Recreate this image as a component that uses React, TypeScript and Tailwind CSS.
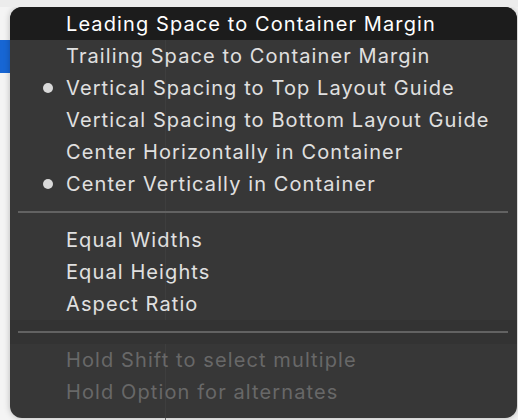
import React from 'react';

type Item = { label: string; bullet?: boolean; highlighted?: boolean; disabled?: boolean };

const groupA: Item[] = [
  { label: 'Leading Space to Container Margin', highlighted: true },
  { label: 'Trailing Space to Container Margin' },
  { label: 'Vertical Spacing to Top Layout Guide', bullet: true },
  { label: 'Vertical Spacing to Bottom Layout Guide' },
  { label: 'Center Horizontally in Container' },
  { label: 'Center Vertically in Container', bullet: true },
];

const groupB: Item[] = [{ label: 'Equal Widths' }, { label: 'Equal Heights' }, { label: 'Aspect Ratio' }];

const hints: Item[] = [
  { label: 'Hold Shift to select multiple', disabled: true },
  { label: 'Hold Option for alternates', disabled: true },
];

function Row({ item, first }: { item: Item; first?: boolean }) {
  const color = item.highlighted ? 'text-white bg-[#1c1c1c]' : item.disabled ? 'text-[#686868]' : 'text-[#e0e0e0]';
  return (
    <div className={`flex items-center ${first ? 'h-[33px]' : 'h-[32px]'} ${color}`}>
      <div className="w-[56px] flex justify-end pr-[13px]">
        {item.bullet && <span className="block w-[10px] h-[10px] rounded-full bg-[#d9d9d9]" />}
      </div>
      <span className="text-[20px] leading-none tracking-[0.055em] whitespace-nowrap">{item.label}</span>
    </div>
  );
}

function Separator() {
  return (
    <div className="h-[24px] flex items-center pl-[8px] pr-[9px]">
      <div className="h-[2px] w-full bg-[#626262]" />
    </div>
  );
}

export default function App() {
  return (
    <div
      className="relative w-[518px] h-[420px] overflow-hidden bg-[#f4f4f4] border-t-[7px] border-[#ececec]"
      style={{ fontFamily: 'Inter, "Helvetica Neue", Arial, sans-serif' }}
    >
      {/* editor canvas behind the menu */}
      <div className="absolute left-[165px] -top-[7px] w-px h-[420px] bg-[#7a7a7a]" />
      <div className="absolute left-0 top-[33px] w-[10px] h-[33px] bg-[#1766d4]" />

      <div className="relative ml-[10px] w-[507px] h-[411px] rounded-[12px] bg-[#373737] overflow-hidden shadow-[0_0_6px_rgba(0,0,0,0.25)]">
        {/* faint guides showing through the translucent menu */}
        <div className="absolute left-[155px] top-0 w-px h-full bg-[#3e3e3e]" />
        <div className="absolute left-0 top-[313px] w-full h-[24px] bg-[#333333]" />

        <div className="relative">
          {groupA.map((it, i) => (
            <Row key={it.label} item={it} first={i === 0} />
          ))}
          <Separator />
          {groupB.map((it) => (
            <Row key={it.label} item={it} />
          ))}
          <Separator />
          {hints.map((it) => (
            <Row key={it.label} item={it} />
          ))}
        </div>
      </div>
    </div>
  );
}
